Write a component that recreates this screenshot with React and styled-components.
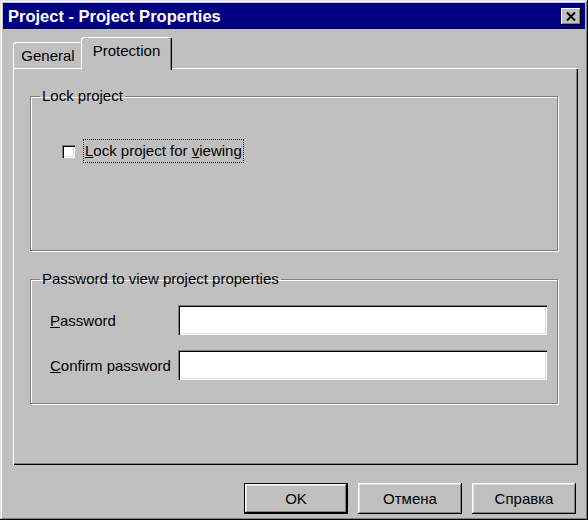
import styled, { createGlobalStyle } from "styled-components";

const GlobalStyle = createGlobalStyle`
  body {
    margin: 0;
    background: #c0c0c0;
    font-family: "Liberation Sans", Arial, sans-serif;
    font-size: 15px;
    color: #000;
  }
`;

const Window = styled.div`
  box-sizing: border-box;
  width: 588px;
  height: 520px;
  padding: 3px;
  background: #c0c0c0;
  box-shadow: inset -1px -1px #000, inset 1px 1px #dfdfdf,
    inset -2px -2px #808080, inset 2px 2px #fff;
  display: flex;
  flex-direction: column;
`;

const TitleBar = styled.div`
  height: 26px;
  background: #000080;
  color: #fff;
  display: flex;
  align-items: center;
  justify-content: space-between;
  padding: 0 4px 0 5px;
`;

const Title = styled.span`
  font-weight: bold;
  font-size: 16.5px;
`;

const CloseButton = styled.div`
  width: 20px;
  height: 17px;
  background: #c0c0c0;
  box-shadow: inset -1px -1px #000, inset 1px 1px #fff, inset -2px -2px #808080;
  display: flex;
  align-items: center;
  justify-content: center;
`;

const Body = styled.div`
  flex: 1;
  display: flex;
  flex-direction: column;
  padding: 8px 7px 0 10px;
`;

const TabStrip = styled.div`
  display: flex;
  align-items: flex-end;
  height: 31px;
`;

const Tab = styled.div`
  position: relative;
  box-sizing: border-box;
  height: ${(p) => (p.$active ? "33px" : "26px")};
  width: ${(p) => p.$width}px;
  margin-left: ${(p) => (p.$active ? "-2px" : "0")};
  margin-bottom: ${(p) => (p.$active ? "-2px" : "0")};
  z-index: ${(p) => (p.$active ? 1 : 0)};
  background: #c0c0c0;
  border-top-left-radius: 3px;
  border-top-right-radius: 2px;
  box-shadow: inset 1px 1px #fff, inset -1px 0 #000, inset -2px 0 #808080;
  display: flex;
  justify-content: center;
  padding-top: ${(p) => (p.$active ? "5px" : "5px")};
`;

const Panel = styled.div`
  box-sizing: border-box;
  height: 397px;
  padding: 20px 20px 0 17px;
  box-shadow: inset 1px 1px #fff, inset -1px -1px #000, inset -2px -2px #808080;
  display: flex;
  flex-direction: column;
  gap: 20px;
`;

const Group = styled.fieldset`
  margin: 0;
  padding: 0;
  border: 1px solid #808080;
  border-radius: 0;
  box-shadow: inset 1px 1px #fff, 1px 1px 0 #fff;
  min-inline-size: 0;
`;

const Legend = styled.legend`
  margin-left: 9px;
  padding: 0 2px;
  line-height: 16px;
`;

const GroupContent = styled.div`
  padding: ${(p) => p.$pad};
`;

const CheckRow = styled.label`
  display: flex;
  align-items: center;
  gap: 9px;
  height: 22px;
`;

const CheckBox = styled.span`
  width: 13px;
  height: 13px;
  background: #fff;
  box-shadow: inset 1px 1px #808080, inset 2px 2px #000, inset -1px -1px #fff,
    inset -2px -2px #dfdfdf;
`;

const FocusText = styled.span`
  outline: 1px dotted #000;
  outline-offset: 0;
  padding: 2px 1px 3px;
`;

const FieldRow = styled.div`
  display: grid;
  grid-template-columns: 128px 1fr;
  align-items: center;
  height: 30px;

  & + & {
    margin-top: 15px;
  }
`;

const TextInput = styled.div`
  height: 30px;
  background: #fff;
  box-shadow: inset 1px 1px #808080, inset 2px 2px #000, inset -1px -1px #fff,
    inset -2px -2px #dfdfdf;
`;

const Footer = styled.div`
  display: flex;
  justify-content: flex-end;
  gap: 10px;
  margin-top: 18px;
  padding-right: 2px;
`;

const Button = styled.div`
  box-sizing: border-box;
  width: 104px;
  height: 31px;
  display: flex;
  align-items: center;
  justify-content: center;
  background: #c0c0c0;
  border: ${(p) => (p.$default ? "1px solid #000" : "none")};
  box-shadow: inset -1px -1px #000, inset 1px 1px #fff, inset -2px -2px #808080,
    inset 2px 2px #dfdfdf;
  font-size: 15px;
`;

function App() {
  return (
    <>
      <GlobalStyle />
      <Window>
        <TitleBar>
          <Title>Project - Project Properties</Title>
          <CloseButton>
            <svg width="10" height="9" viewBox="0 0 10 9">
              <path d="M1 0.5 L9 8.5 M9 0.5 L1 8.5" stroke="#000" strokeWidth="2" />
            </svg>
          </CloseButton>
        </TitleBar>
        <Body>
          <TabStrip>
            <Tab $width={70}>General</Tab>
            <Tab $width={91} $active>
              Protection
            </Tab>
          </TabStrip>
          <Panel>
            <Group>
              <Legend>Lock project</Legend>
              <GroupContent $pad="36px 31px 88px">
                <CheckRow>
                  <CheckBox />
                  <FocusText>
                    <u>L</u>ock project for <u>v</u>iewing
                  </FocusText>
                </CheckRow>
              </GroupContent>
            </Group>
            <Group>
              <Legend>Password to view project properties</Legend>
              <GroupContent $pad="18px 10px 23px 19px">
                <FieldRow>
                  <span>
                    <u>P</u>assword
                  </span>
                  <TextInput />
                </FieldRow>
                <FieldRow>
                  <span>
                    <u>C</u>onfirm password
                  </span>
                  <TextInput />
                </FieldRow>
              </GroupContent>
            </Group>
          </Panel>
          <Footer>
            <Button $default>OK</Button>
            <Button>Отмена</Button>
            <Button>Справка</Button>
          </Footer>
        </Body>
      </Window>
    </>
  );
}

export default App;
